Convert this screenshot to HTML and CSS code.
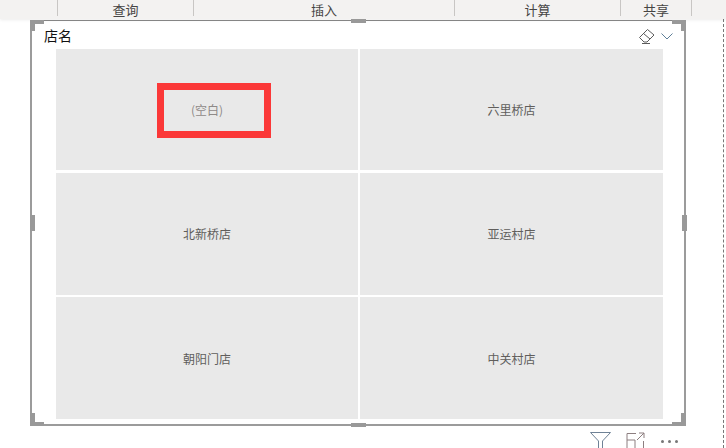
FILE: index.html
```html
<!DOCTYPE html>
<html lang="zh">
<head>
<meta charset="utf-8">
<title>店名</title>
<link rel="stylesheet" href="styles.css">
</head>
<body>
<div class="page">
  <header class="ribbon">
    <div class="group g0"></div>
    <div class="group g1">查询</div>
    <div class="group g2">插入</div>
    <div class="group g3">计算</div>
    <div class="group g4">共享</div>
  </header>
  <section class="visual">
    <span class="grip tl"></span><span class="grip tr"></span><span class="grip bl"></span><span class="grip br"></span>
    <span class="nub top"></span><span class="nub bottom"></span><span class="nub left"></span><span class="nub right"></span>
    <div class="head">
      <span class="title">店名</span>
      <span class="head-icons">
        <svg class="eraser" width="16" height="15" viewBox="0 0 16 15"><path d="M0.5 8.5 L8.5 0.5 L15 6 L8 13 L5 13 Z M4.5 4.5 L11 10 M3 14.5 H11" fill="none" stroke="#5b5b5b" stroke-width="1"/></svg>
        <svg class="chev" width="12" height="7" viewBox="0 0 12 7"><path d="M0.5 0.5 L6 6 L11.5 0.5" fill="none" stroke="#5f7f98" stroke-width="1"/></svg>
      </span>
    </div>
    <div class="grid">
      <div class="tile blank">(空白)</div>
      <div class="tile">六里桥店</div>
      <div class="tile">北新桥店</div>
      <div class="tile">亚运村店</div>
      <div class="tile">朝阳门店</div>
      <div class="tile">中关村店</div>
    </div>
    <div class="mark"></div>
  </section>
  <div class="actions">
    <svg class="funnel" width="21" height="16" viewBox="0 0 21 16"><path d="M0.5 0.5 H20.5 L12.5 9 V16 M0.5 0.5 L8.5 9 V16" fill="none" stroke="#6f8296" stroke-width="1"/></svg>
    <svg width="19" height="16" viewBox="0 0 19 16"><path d="M10 1.5 H1 V16 M1 8 H9 V16 M17.5 9 V16 M11 8 L18 1 M13 1 H18 V6" fill="none" stroke="#8d7f80" stroke-width="1"/></svg>
    <span class="dots"><i></i><i></i><i></i></span>
  </div>
  <div class="dash"></div>
</div>
</body>
</html>
```
FILE: styles.css
```css
* { box-sizing: border-box; }
html, body { margin: 0; padding: 0; }
body { background: #fff; font-family: "Noto Sans CJK SC", "Noto Sans", sans-serif; overflow: hidden; }
.page { position: relative; width: 726px; height: 448px; overflow: hidden; }
.ribbon { display: flex; height: 19px; background: #f3f2f1; box-shadow: 0 1px 3px rgba(0,0,0,.08); }
.group { position: relative; height: 16px; border-right: 1px solid #c8c6c4; font-size: 13px; line-height: 19px; color: #464544; text-align: center; }
.g0 { width: 58px; }
.g1 { width: 136px; }
.g2 { width: 261px; }
.g3 { width: 166px; }
.g4 { width: 71px; }
.visual { position: relative; width: 656px; height: 406px; margin: 1px 0 0 30px; padding: 0 22px 0 24px; border: solid #9b9b9b; border-width: 1px 2px 2px 2px; border-top-color: #858585; }
.head { display: flex; justify-content: space-between; align-items: flex-start; height: 28px; margin-left: -12px; margin-right: -11px; }
.title { font-size: 14px; color: #111; line-height: 28px; }
.head-icons { display: flex; align-items: flex-start; gap: 6px; padding-top: 8px; }
.chev { margin-top: 4px; }
.grid { display: grid; grid-template-columns: 302px 303px; grid-template-rows: 121px 122px 122px; gap: 2.5px 2px; }
.tile { display: flex; align-items: center; justify-content: center; background: #e9e9e9; font-size: 12px; color: #605e5c; }
.blank { color: #8f8a88; }
.mark { position: absolute; left: 125px; top: 62px; width: 114px; height: 55px; border: 7px solid #fb3838; }
.grip { position: absolute; background: #999; }
.grip::before { content: ""; position: absolute; background: #999; width: 5px; height: 11px; }
.tl, .tr { top: -1px; width: 14px; height: 4px; }
.bl, .br { bottom: -2px; width: 14px; height: 4px; }
.tl, .bl { left: -2px; }
.tr, .br { right: -2px; }
.tl::before { left: 0; top: 0; }
.tr::before { right: 0; top: 0; }
.bl::before { left: 0; bottom: 0; height: 13px; }
.br::before { right: 0; bottom: 0; height: 13px; }
.nub { position: absolute; background: #999; }
.top, .bottom { left: 319px; width: 15px; height: 4px; }
.top { top: -2px; }
.bottom { bottom: -3px; }
.left, .right { top: 194px; width: 5px; height: 16px; }
.left { left: -2px; }
.right { right: -3px; }
.actions { position: absolute; left: 590px; top: 432px; display: flex; gap: 16px; align-items: flex-start; }
.funnel { margin-right: -1px; }
.dots { display: flex; gap: 4px; margin: 8px 0 0 0; }
.dots i { width: 3px; height: 3px; border-radius: 50%; background: #777; }
.dash { position: absolute; right: 2px; top: 19px; bottom: 0; border-left: 1px dashed #777; }
```
